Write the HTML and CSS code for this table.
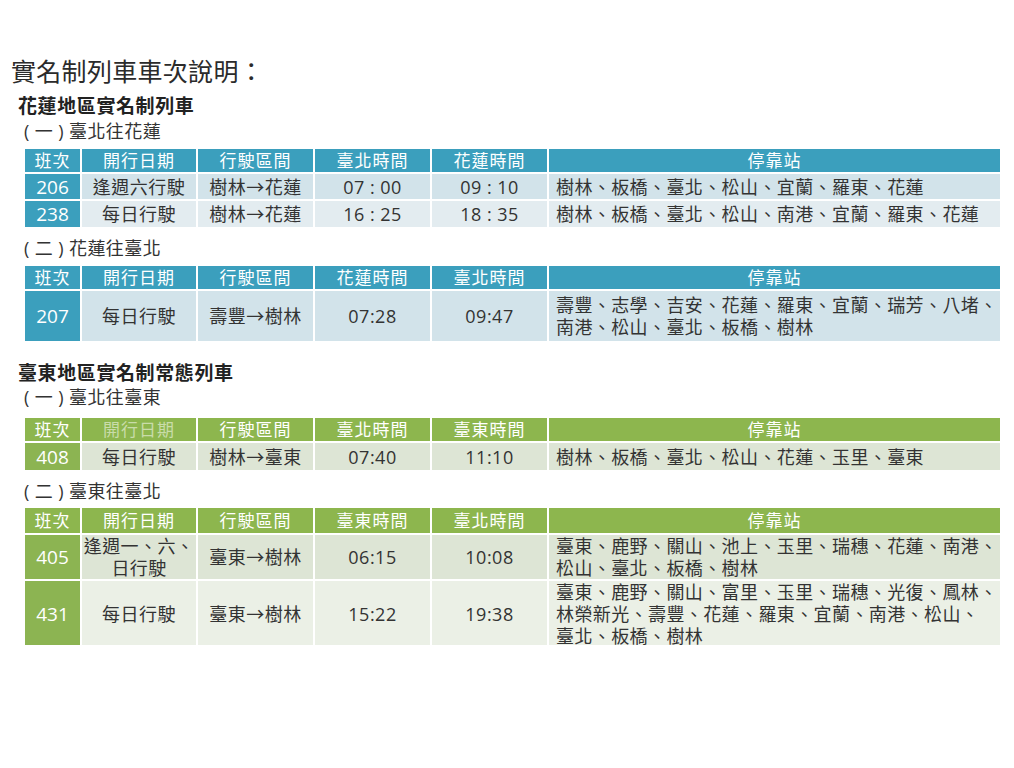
FILE: index.html
```html
<!DOCTYPE html>
<html lang="zh-Hant">
<head>
<meta charset="utf-8">
<title>實名制列車車次說明</title>
<link rel="stylesheet" href="styles.css">
</head>
<body>
<div class="page">
  <h1 class="title">實名制列車車次說明：</h1>

  <h2 class="heading h-first">花蓮地區實名制列車</h2>
  <p class="sub sub-first">( 一 ) 臺北往花蓮</p>
  <div class="tbl blue t1">
    <div class="row r23 head">
      <div class="c">班次</div><div class="c">開行日期</div><div class="c">行駛區間</div><div class="c">臺北時間</div><div class="c">花蓮時間</div><div class="c">停靠站</div>
    </div>
    <div class="row r25 odd">
      <div class="c num">206</div><div class="c">逢週六行駛</div><div class="c">樹林→花蓮</div><div class="c">07 : 00</div><div class="c">09 : 10</div><div class="c stops">樹林、板橋、臺北、松山、宜蘭、羅東、花蓮</div>
    </div>
    <div class="row r26 even">
      <div class="c num">238</div><div class="c">每日行駛</div><div class="c">樹林→花蓮</div><div class="c">16 : 25</div><div class="c">18 : 35</div><div class="c stops">樹林、板橋、臺北、松山、南港、宜蘭、羅東、花蓮</div>
    </div>
  </div>

  <p class="sub sub-gap">( 二 ) 花蓮往臺北</p>
  <div class="tbl blue t2">
    <div class="row r23 head">
      <div class="c">班次</div><div class="c">開行日期</div><div class="c">行駛區間</div><div class="c">花蓮時間</div><div class="c">臺北時間</div><div class="c">停靠站</div>
    </div>
    <div class="row r50 odd">
      <div class="c num">207</div><div class="c">每日行駛</div><div class="c">壽豐→樹林</div><div class="c">07:28</div><div class="c">09:47</div><div class="c stops">壽豐、志學、吉安、花蓮、羅東、宜蘭、瑞芳、八堵、<br>南港、松山、臺北、板橋、樹林</div>
    </div>
  </div>

  <h2 class="heading h-second">臺東地區實名制常態列車</h2>
  <p class="sub sub-after">( 一 ) 臺北往臺東</p>
  <div class="tbl green t3">
    <div class="row r23 head">
      <div class="c">班次</div><div class="c faded">開行日期</div><div class="c">行駛區間</div><div class="c">臺北時間</div><div class="c">臺東時間</div><div class="c">停靠站</div>
    </div>
    <div class="row r27 odd">
      <div class="c num">408</div><div class="c">每日行駛</div><div class="c">樹林→臺東</div><div class="c">07:40</div><div class="c">11:10</div><div class="c stops">樹林、板橋、臺北、松山、花蓮、玉里、臺東</div>
    </div>
  </div>

  <p class="sub sub-gap">( 二 ) 臺東往臺北</p>
  <div class="tbl green t4">
    <div class="row r25 head">
      <div class="c">班次</div><div class="c">開行日期</div><div class="c">行駛區間</div><div class="c">臺東時間</div><div class="c">臺北時間</div><div class="c">停靠站</div>
    </div>
    <div class="row r44 odd">
      <div class="c num">405</div><div class="c two">逢週一、六、<br>日行駛</div><div class="c">臺東→樹林</div><div class="c">06:15</div><div class="c">10:08</div><div class="c stops">臺東、鹿野、關山、池上、玉里、瑞穗、花蓮、南港、<br>松山、臺北、板橋、樹林</div>
    </div>
    <div class="row r64 even">
      <div class="c num">431</div><div class="c">每日行駛</div><div class="c">臺東→樹林</div><div class="c">15:22</div><div class="c">19:38</div><div class="c stops">臺東、鹿野、關山、富里、玉里、瑞穗、光復、鳳林、<br>林榮新光、壽豐、花蓮、羅東、宜蘭、南港、松山、<br>臺北、板橋、樹林</div>
    </div>
  </div>
</div>
</body>
</html>
```

FILE: styles.css
```css
html, body {
  margin: 0;
  padding: 0;
  background: #ffffff;
}

body {
  font-family: "Open Sans", "Noto Sans CJK TC", "Noto Sans CJK SC", sans-serif;
  color: #333333;
}

.page {
  padding: 56px 0 0 11px;
  width: 1002px;
  box-sizing: border-box;
}

.title {
  margin: 0;
  font-size: 25px;
  line-height: 30px;
  font-weight: normal;
  color: #2b2b2b;
  letter-spacing: 0.3px;
}

.heading {
  margin: 0 0 0 7px;
  font-size: 19px;
  line-height: 22px;
  font-weight: bold;
  color: #222222;
  letter-spacing: 0.6px;
}

.h-first { margin-top: 9px; }
.h-second { margin-top: 21px; }

.sub {
  margin: 0 0 0 13px;
  font-size: 18px;
  line-height: 22px;
  color: #333333;
  letter-spacing: 0.4px;
}

.sub-first { margin-top: 3px; }
.sub-after { margin-top: 2px; }
.sub-gap { margin-top: 10px; }

.tbl {
  margin-left: 14px;
  width: 975px;
  display: flex;
  flex-direction: column;
  gap: 2px;
}

.t1, .t2 { margin-top: 7px; }
.t3 { margin-top: 10px; }
.t4 { margin-top: 6px; }

.row {
  display: grid;
  grid-template-columns: 55px 114px 115px 115px 115px 1fr;
  column-gap: 2px;
}

.r23 { height: 23px; }
.r25 { height: 25px; }
.r26 { height: 26px; }
.r27 { height: 27px; }
.r44 { height: 44px; }
.r50 { height: 50px; }
.r64 { height: 64px; }

.c {
  display: flex;
  align-items: center;
  justify-content: center;
  font-size: 18px;
  line-height: 22px;
  letter-spacing: 0.5px;
  text-align: center;
  white-space: nowrap;
}

.head .c {
  color: #ffffff;
  font-size: 17px;
  letter-spacing: 1px;
}

.c.num {
  color: #ffffff;
  font-size: 19px;
  letter-spacing: 0;
}

.c.stops {
  justify-content: flex-start;
  text-align: left;
  padding-left: 7px;
  line-height: 22px;
  letter-spacing: 0.4px;
}

.c.two {
  line-height: 22px;
  letter-spacing: 0.4px;
}

/* blue tables */
.blue .head .c { background: #3b9fbd; }
.blue .num { background: #3b9fbd; }
.blue .odd .c:not(.num) { background: #d2e3ea; }
.blue .even .c:not(.num) { background: #e3ecf0; }

/* green tables */
.green .head .c { background: #8db64e; }
.green .head .c.faded { color: #c9dcaa; }
.green .num { background: #8cb452; }
.green .odd .c:not(.num) { background: #dde5d5; }
.green .even .c:not(.num) { background: #ebf0e6; }
```
